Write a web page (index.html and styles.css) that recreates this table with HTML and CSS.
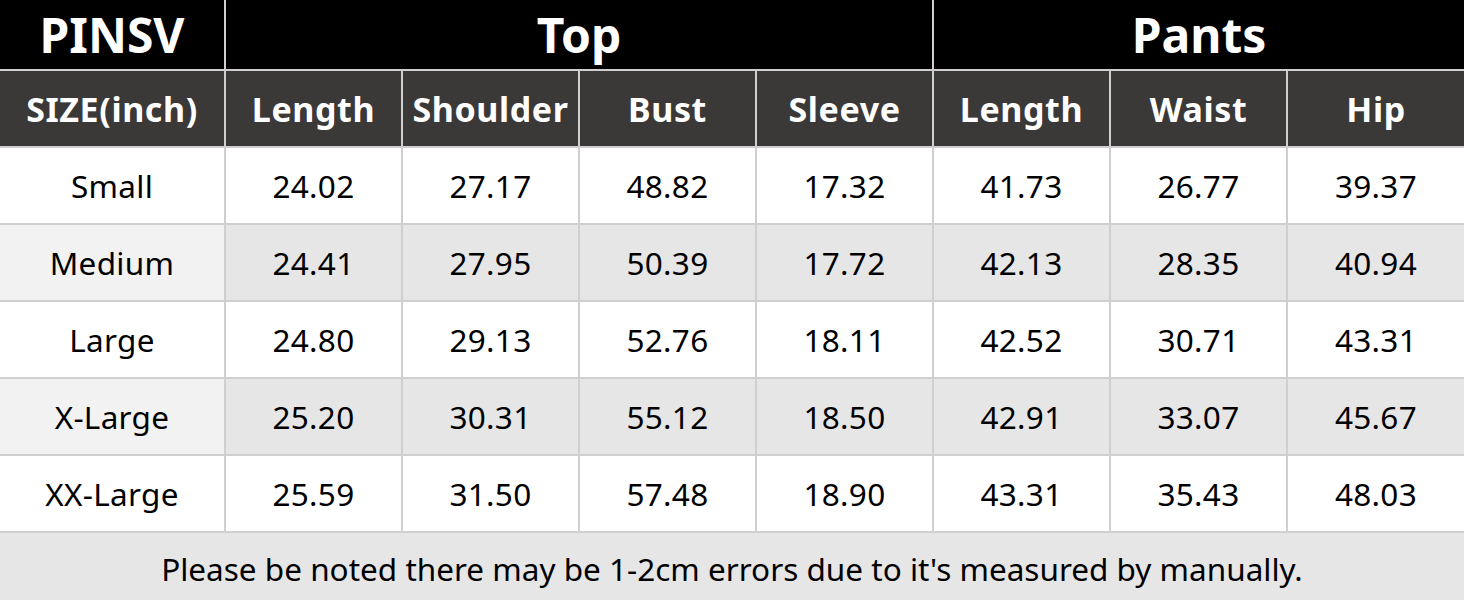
FILE: index.html
```html
<!DOCTYPE html>
<html>
<head>
<meta charset="utf-8">
<link rel="stylesheet" href="styles.css">
</head>
<body>
<table class="chart">
  <colgroup>
    <col class="c-first"><col class="c"><col class="c"><col class="c"><col class="c"><col class="c"><col class="c"><col class="c">
  </colgroup>
  <thead>
    <tr class="row-top">
      <th class="brand">PINSV</th>
      <th colspan="4" class="group">Top</th>
      <th colspan="3" class="group">Pants</th>
    </tr>
    <tr class="row-head">
      <th>SIZE(inch)</th>
      <th>Length</th><th>Shoulder</th><th>Bust</th><th>Sleeve</th>
      <th>Length</th><th>Waist</th><th>Hip</th>
    </tr>
  </thead>
  <tbody>
    <tr class="row"><td>Small</td><td>24.02</td><td>27.17</td><td>48.82</td><td>17.32</td><td>41.73</td><td>26.77</td><td>39.37</td></tr>
    <tr class="row alt"><td>Medium</td><td>24.41</td><td>27.95</td><td>50.39</td><td>17.72</td><td>42.13</td><td>28.35</td><td>40.94</td></tr>
    <tr class="row"><td>Large</td><td>24.80</td><td>29.13</td><td>52.76</td><td>18.11</td><td>42.52</td><td>30.71</td><td>43.31</td></tr>
    <tr class="row alt"><td>X-Large</td><td>25.20</td><td>30.31</td><td>55.12</td><td>18.50</td><td>42.91</td><td>33.07</td><td>45.67</td></tr>
    <tr class="row"><td>XX-Large</td><td>25.59</td><td>31.50</td><td>57.48</td><td>18.90</td><td>43.31</td><td>35.43</td><td>48.03</td></tr>
    <tr class="note"><td colspan="8">Please be noted there may be 1-2cm errors due to it's measured by manually.</td></tr>
  </tbody>
</table>
</body>
</html>
```

FILE: styles.css
```css
html, body {
  margin: 0;
  padding: 0;
  background: #ffffff;
}
.chart {
  width: 1464px;
  border-collapse: collapse;
  table-layout: fixed;
  font-family: "Noto Sans", "Open Sans", sans-serif;
}
.c-first { width: 225px; }
.c { width: 177px; }
.chart th, .chart td {
  border: 2px solid #d0cece;
  padding: 0;
  text-align: center;
  vertical-align: middle;
  white-space: nowrap;
}
.chart tr > *:first-child { border-left: none; }
.chart tr > *:last-child { border-right: none; }
.row-top th {
  border-top: none;
  background: #000000;
  color: #ffffff;
  height: 69px;
  font-size: 48px;
  font-weight: 700;
  line-height: 1;
}
.row-head th {
  background: #3b3838;
  color: #ffffff;
  height: 75px;
  font-size: 34px;
  letter-spacing: 0.6px;
  font-weight: 700;
  line-height: 1;
}
.row td {
  height: 75px;
  background: #ffffff;
  color: #000000;
  font-size: 31.5px;
  letter-spacing: 0.3px;
  line-height: 1;
}
.row.alt td { background: #e7e6e6; }
.row.alt td:first-child { background: #f2f2f2; }
.note td {
  height: 63px;
  background: #e7e6e6;
  color: #000000;
  font-size: 31.5px;
  line-height: 1;
  padding-top: 4px;
  border-bottom: none;
}
```
